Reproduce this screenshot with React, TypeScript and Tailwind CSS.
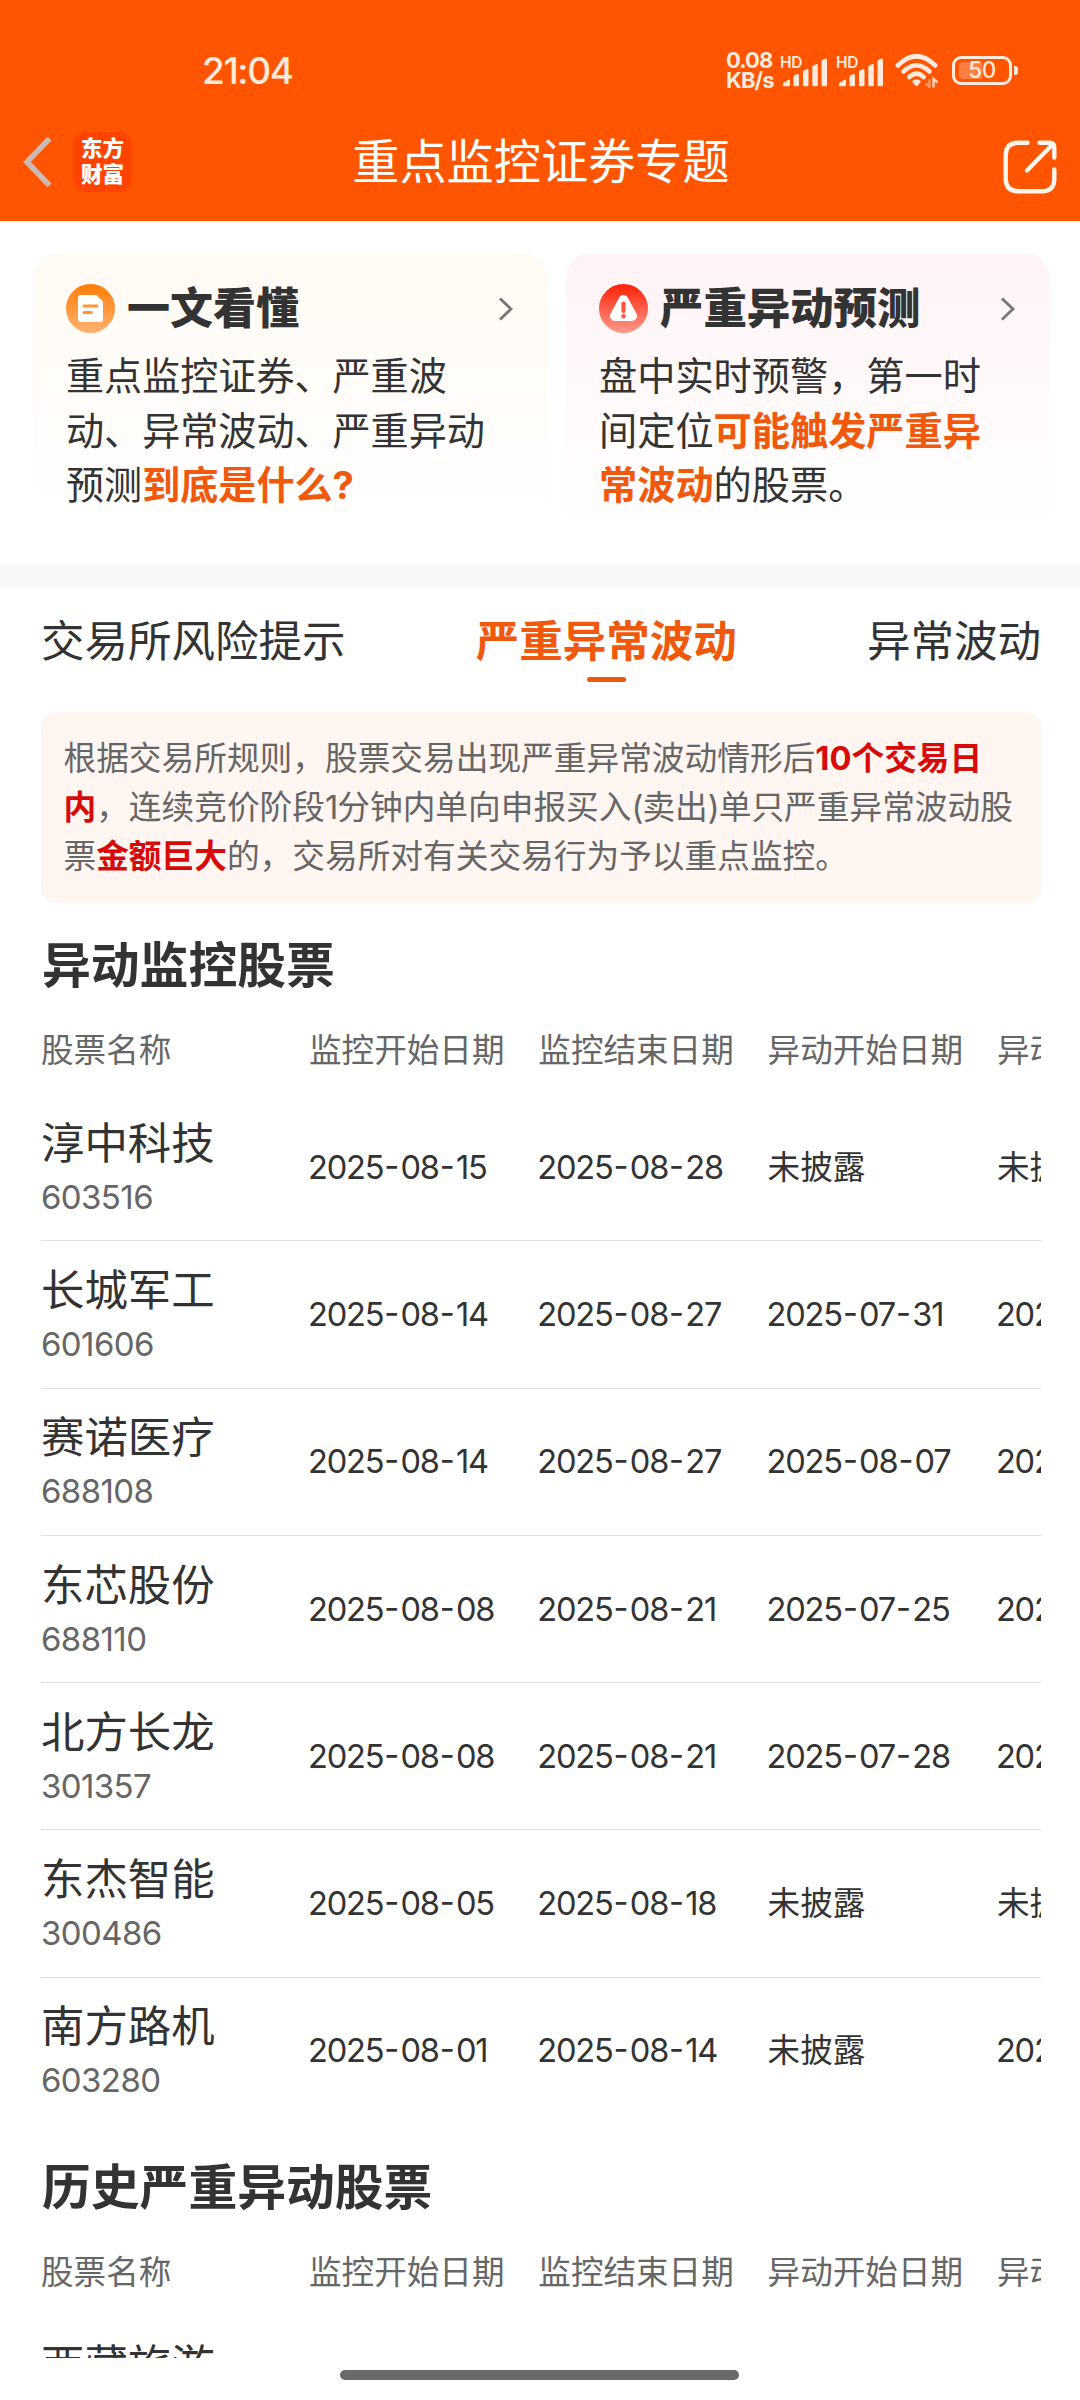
type Stock = { name: string; code: string; dates: string[] };

const stocks: Stock[] = [
  { name: "淳中科技", code: "603516", dates: ["2025-08-15", "2025-08-28", "未披露", "未披露"] },
  { name: "长城军工", code: "601606", dates: ["2025-08-14", "2025-08-27", "2025-07-31", "2025-08-13"] },
  { name: "赛诺医疗", code: "688108", dates: ["2025-08-14", "2025-08-27", "2025-08-07", "2025-08-13"] },
  { name: "东芯股份", code: "688110", dates: ["2025-08-08", "2025-08-21", "2025-07-25", "2025-08-07"] },
  { name: "北方长龙", code: "301357", dates: ["2025-08-08", "2025-08-21", "2025-07-28", "2025-08-07"] },
  { name: "东杰智能", code: "300486", dates: ["2025-08-05", "2025-08-18", "未披露", "未披露"] },
  { name: "南方路机", code: "603280", dates: ["2025-08-01", "2025-08-14", "未披露", "2025-07-31"] },
];

const columns = ["监控开始日期", "监控结束日期", "异动开始日期", "异动结束日期"];

function Signal() {
  return (
    <div className="relative h-[32px] w-[48px]">
      <span className="absolute -left-px top-0 text-[15.500px] font-semibold leading-[15px] tracking-[-0.300px]">HD</span>
      <svg className="absolute left-0 top-0" width="48" height="32" viewBox="0 0 48 32" fill="currentColor">
        <path d="M2 31v-2q0-1 1-1.500l4-2.500q2-.8 2 1v4q0 1.200-1.200 1.200H3.200Q2 31.200 2 31Z" />
        <path d="M12.500 30v-8q0-1.500 1.500-2l2-.8q2-.4 2 1V30q0 1.200-1.200 1.200h-3q-1.300 0-1.300-1.200Z" />
        <path d="M22 30V17q0-1.300 1.200-1.800l2.500-1q1.800-.4 1.800 1.200V30q0 1.200-1.200 1.200h-3Q22 31.200 22 30Z" />
        <path d="M31.300 30V12q0-1.300 1.200-1.800l2.500-1q1.800-.4 1.800 1.200V30q0 1.200-1.200 1.200h-3q-1.300 0-1.300-1.200Z" />
        <path d="M40.500 30V6.500q0-1.300 1.200-1.800l2.500-1q1.800-.4 1.800 1.200V30q0 1.200-1.200 1.200h-3q-1.300 0-1.300-1.200Z" />
      </svg>
    </div>
  );
}

function Wifi() {
  return (
    <svg width="44" height="34" viewBox="0 0 44 34" fill="none" stroke="currentColor" strokeWidth="4.600" strokeLinecap="round">
      <path d="M2.800 11.500Q21.500-7 40.200 11.500" />
      <path d="M8.500 17.500Q21.500 5.300 34.500 17.500" />
      <path d="M14.300 23Q21.500 16.300 28.700 23" />
      <path d="M21.500 25.500c3 0 4.800 1.400 3.800 3l-2.600 2.900q-1.200 1-2.400 0l-2.600-2.900c-1-1.600.8-3 3.800-3Z" fill="currentColor" stroke="none" />
      <path d="M34.500 25v8l-4-3.500" strokeWidth="2.400" opacity=".45" strokeLinecap="butt" />
      <path d="M38.500 33.500V25l4 3.500" strokeWidth="2.400" opacity=".85" strokeLinecap="butt" />
    </svg>
  );
}

function Battery() {
  return (
    <div className="flex items-center gap-[2px]">
      <div className="relative flex h-[29px] w-[60px] items-center justify-center rounded-[9px] border-[3px] border-current">
        <div className="absolute left-[4px] top-[3px] h-[17px] w-[23px] rounded-l-[4px] bg-white/25" />
        <span className="relative text-[22.500px] font-medium leading-none tracking-[-0.500px]">50</span>
      </div>
      <div className="h-[9px] w-[4px] rounded-r-[3px] bg-current" />
    </div>
  );
}

function Chevron() {
  return (
    <svg width="16" height="26" viewBox="0 0 16 26" fill="none" stroke="#777" strokeWidth="2.800">
      <path d="M2 2.500 13 13 2 23.500" />
    </svg>
  );
}

function DocIcon() {
  return (
    <svg width="49" height="49" viewBox="0 0 49 49">
      <defs>
        <linearGradient id="doc" x1="0" y1="0" x2="0" y2="1">
          <stop offset="0" stopColor="#ff7d05" />
          <stop offset="1" stopColor="#ffb172" />
        </linearGradient>
      </defs>
      <circle cx="24.500" cy="24.500" r="24.500" fill="url(#doc)" />
      <path d="M15 11h15.500L37 17.500V35q0 3-3 3H15q-3 0-3-3V14q0-3 3-3Z" fill="#fff" />
      <path d="M18 22h13M18 28.500h7.500" stroke="#ff9632" strokeWidth="3" strokeLinecap="round" />
    </svg>
  );
}

function AlertIcon() {
  return (
    <svg width="49" height="49" viewBox="0 0 49 49">
      <defs>
        <linearGradient id="alert" x1="0" y1="0" x2="0" y2="1">
          <stop offset="0" stopColor="#ff2007" />
          <stop offset="1" stopColor="#ff9a8c" />
        </linearGradient>
      </defs>
      <circle cx="24.500" cy="24.500" r="24.500" fill="url(#alert)" />
      <path d="M24.500 16 16 32h17Z" fill="#fff" stroke="#fff" strokeWidth="10" strokeLinejoin="round" />
      <path d="M24.500 19.500v7.500" stroke="#ff5443" strokeWidth="4.200" strokeLinecap="round" />
      <circle cx="24.500" cy="32.300" r="2.200" fill="#ff5443" />
    </svg>
  );
}

function DateText({ value }: { value: string }) {
  if (!value.includes("-")) return <div>{value}</div>;
  return (
    <div className="-ml-[1px] [font-feature-settings:'case']">
      {value.split("-").map((part, i) => (
        <span key={i}>
          {i > 0 && <span className="ml-[1px] mr-[1.200px]">-</span>}
          <span className="tracking-[-1.200px]">{part}</span>
        </span>
      ))}
    </div>
  );
}

function TableHead() {
  return (
    <div className="grid h-[88px] grid-cols-[268px_229.300px_229.300px_229.300px_229.300px] items-center overflow-hidden whitespace-nowrap text-[32.600px] text-[#666]">
      <div>股票名称</div>
      {columns.map((c) => (
        <div key={c}>{c}</div>
      ))}
    </div>
  );
}

function SectionTitle({ children }: { children: string }) {
  return <h2 className="h-[60px] pl-px text-[48.800px] font-bold leading-[60px]">{children}</h2>;
}

export default function App() {
  return (
    <div
      lang="zh-CN"
      className="flex h-[2400px] w-[1080px] flex-col overflow-hidden bg-white font-['Inter','Noto_Sans_CJK_SC',sans-serif] text-[#333]"
    >
      <header className="h-[221px] shrink-0 bg-[#ff5500]">
        <div className="flex h-[102px] items-end justify-between pb-[12px] pl-[202px] pr-[62px] text-[#ffeadd]">
          <div className="text-[37px] font-medium leading-[38px] tracking-[-1.400px]">21:04</div>
          <div className="flex items-center">
            <div className="mr-[7px] w-[48px] text-[22px] font-bold leading-[19.300px] tracking-[-0.900px]">
              <div>0.08</div>
              <div>KB/s</div>
            </div>
            <Signal />
            <div className="w-[8px]" />
            <Signal />
            <div className="w-[10px]" />
            <Wifi />
            <div className="w-[13px]" />
            <Battery />
          </div>
        </div>
        <div className="grid h-[119px] grid-cols-[1fr_auto_1fr] items-center">
          <div className="flex items-center gap-[21px] pl-[22px]">
            <svg width="30" height="50" viewBox="0 0 30 50" fill="none" stroke="#cbbab4" strokeWidth="5.500">
              <path d="M27.500 1.500 5 25l22.500 23.500" />
            </svg>
            <div className="flex h-[60px] w-[59px] flex-col items-center justify-center rounded-[13px] bg-[#ff4400] text-[21.500px] font-black leading-[25.500px] text-white">
              <span>东方</span>
              <span>财富</span>
            </div>
          </div>
          <h1 className="pl-[2px] text-[47.200px] leading-[60px] text-white">重点监控证券专题</h1>
          <div className="flex justify-end pr-[23px] pt-[10px]">
            <svg width="54" height="54" viewBox="0 0 54 54" fill="none" stroke="#fff5ec" strokeWidth="4.400" strokeLinecap="round">
              <path d="M24.500 2.700H15.500Q2.700 2.700 2.700 15.500v23Q2.700 51.300 15.500 51.300h23Q51.300 51.300 51.300 38.500V29.500" />
              <path d="M36.500 2.700h10q4.800 0 4.800 4.800v10M49 5 24 30.500" />
            </svg>
          </div>
        </div>
      </header>

      <section className="flex h-[344px] shrink-0 gap-[19px] pl-[33px] pr-[31px] pt-[33px]">
        <div className="h-[280px] w-[514px] rounded-[22px] bg-linear-to-b from-[#fffaf3] to-white px-[33px] pt-[30px]">
          <div className="flex h-[49px] items-center">
            <DocIcon />
            <h3 className="ml-[12px] flex-1 text-[43px] font-black leading-[49px]">一文看懂</h3>
            <Chevron />
          </div>
          <p className="mt-[16px] whitespace-nowrap text-[38.100px] leading-[54.700px]">
            重点监控证券、严重波
            <br />
            动、异常波动、严重异动
            <br />
            预测<b className="text-[#f0590c]">到底是什么?</b>
          </p>
        </div>
        <div className="h-[280px] w-[483px] rounded-[22px] bg-linear-to-b from-[#fff3f5] to-white px-[33px] pt-[30px]">
          <div className="flex h-[49px] items-center">
            <AlertIcon />
            <h3 className="ml-[12px] flex-1 whitespace-nowrap text-[43.400px] font-black leading-[49px]">严重异动预测</h3>
            <Chevron />
          </div>
          <p className="mt-[16px] whitespace-nowrap text-[38.200px] leading-[54.700px]">
            盘中实时预警，第一时
            <br />
            间定位<b className="text-[#f0590c]">可能触发严重异</b>
            <br />
            <b className="text-[#f0590c]">常波动</b>的股票。
          </p>
        </div>
      </section>

      <div className="h-[22px] shrink-0 bg-[#f7f7fa]" />

      <main className="h-[1771px] shrink-0 overflow-hidden pl-[41px] pr-[39px]">
        <nav className="flex h-[125px] justify-between pt-[24px] text-[43.500px] leading-[60px]">
          <div>交易所风险提示</div>
          <div className="flex flex-col items-center font-bold text-[#f0590c]">
            严重异常波动
            <div className="mt-[6px] h-[5px] w-[39px] rounded-full bg-[#f0590c]" />
          </div>
          <div>异常波动</div>
        </nav>

        <p className="h-[191px] whitespace-nowrap rounded-[16px] bg-[#fff5f1] pl-[22.500px] pt-[22px] text-[32.700px] leading-[48.900px] text-[#666]">
          根据交易所规则，股票交易出现严重异常波动情形后<b className="text-[#d70a0a]">10个交易日</b>
          <br />
          <b className="text-[#d70a0a]">内</b>，连续竞价阶段<span className="tracking-[-1px]">1</span>分钟内单向申报买入
          <span className="tracking-[-1px]">(</span>卖出<span className="tracking-[-1px]">)</span>单只严重异常波动股
          <br />票<b className="text-[#d70a0a]">金额巨大</b>的，交易所对有关交易行为予以重点监控。
        </p>

        <div className="pt-[33px]">
          <SectionTitle>异动监控股票</SectionTitle>
          <div className="h-[10px]" />
          <TableHead />
          {stocks.map((s) => (
            <div
              key={s.code}
              className="grid h-[147.300px] grid-cols-[268px_229.300px_229.300px_229.300px_229.300px] items-center overflow-hidden whitespace-nowrap border-b border-[#dedede] text-[32.600px] last:border-transparent"
            >
              <div>
                <div className="text-[43.400px] leading-[60px]">{s.name}</div>
                <div className="text-[33px] leading-[49px] tracking-[-0.600px] text-[#666]">{s.code}</div>
              </div>
              {s.dates.map((d, i) => (
                <DateText key={i} value={d} />
              ))}
            </div>
          ))}
        </div>

        <div className="pt-[33px]">
          <SectionTitle>历史严重异动股票</SectionTitle>
          <div className="h-[10px]" />
          <TableHead />
          <div className="pt-[19px] text-[43.400px] leading-[60px]">西藏旅游</div>
        </div>
      </main>

      <footer className="flex h-[42px] shrink-0 justify-center bg-white pr-px pt-[12px]">
        <div className="h-[10px] w-[399px] rounded-full bg-[#696969]" />
      </footer>
    </div>
  );
}
